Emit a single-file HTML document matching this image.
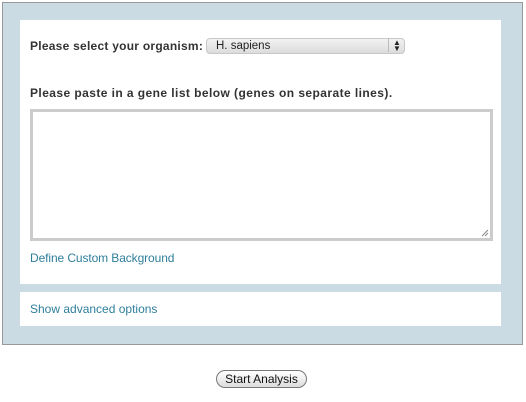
<!DOCTYPE html>
<html><head><style>
body{margin:0;width:526px;height:402px;background:#fff;position:relative;font-family:"Liberation Sans",sans-serif;overflow:hidden}
.outer{position:absolute;left:2px;top:2px;width:519px;height:341px;background:#cadbe3;border:1px solid #999}
.p1{position:absolute;left:20px;top:20px;width:481px;height:264px;background:#fff}
.p2{position:absolute;left:20px;top:292px;width:481px;height:34px;background:#fff}
.lbl{position:absolute;font-size:12px;font-weight:bold;color:#333;white-space:nowrap}
.link{position:absolute;font-size:12px;color:#2f7f9b;white-space:nowrap}
.sel{position:absolute;left:206px;top:38px;width:199px;height:16px;border-radius:4px;background:linear-gradient(#f2f2f2,#dcdcdc);border:1px solid #c8c8c8;box-sizing:border-box;font-size:11px;color:#222}
.ta{position:absolute;left:30px;top:109px;width:463px;height:132px;border:3px solid #ccc;box-sizing:border-box;background:#fff}
.btn{position:absolute;left:216px;top:370px;width:91px;height:18px;border:1px solid #777;border-radius:9px;box-sizing:border-box;background:linear-gradient(#fff,#ddd);font-size:12px;color:#111;text-align:center;line-height:16px}
</style></head><body>
<div class="outer"></div>
<div class="p1"></div>
<div class="p2"></div>
<div class="lbl" style="left:30px;top:39px;letter-spacing:0.25px">Please select your organism:</div>
<div class="sel"><span style="position:absolute;left:9px;top:1px;font-size:11.5px">H. sapiens</span><span style="position:absolute;left:181px;top:-1px;height:14px;border-left:1px solid #bbb"></span><span style="position:absolute;left:186px;top:0px;font-size:8px;line-height:7px">▲<br></span><span style="position:absolute;left:186px;top:6px;font-size:8px;line-height:7px">▼</span></div>
<div class="lbl" style="left:30px;top:86px;letter-spacing:0.43px">Please paste in a gene list below (genes on separate lines).</div>
<div class="ta"><svg style="position:absolute;right:1px;bottom:1px" width="8" height="8"><path d="M1 7L7 1M4 7L7 4" stroke="#888" stroke-width="1"/></svg></div>
<div class="link" style="left:30px;top:251px;letter-spacing:-0.1px">Define Custom Background</div>
<div class="link" style="left:30px;top:302px">Show advanced options</div>
<div class="btn">Start Analysis</div>
</body></html>
